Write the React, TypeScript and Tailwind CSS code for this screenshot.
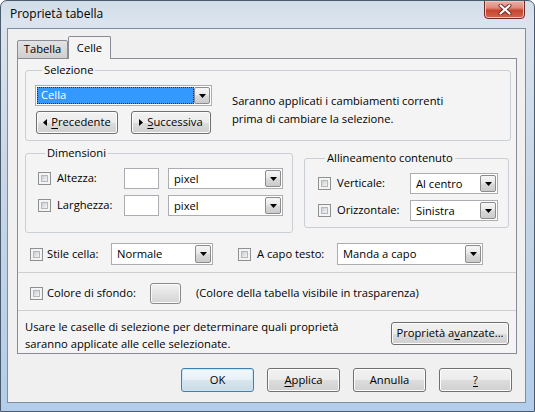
import React from "react";

const Tri = () => (
  <svg width="7" height="4" viewBox="0 0 7 4">
    <path d="M0 0h7L3.5 4z" fill="#000" />
  </svg>
);

function DropButton() {
  return (
    <div className="ml-auto my-[1px] mr-[1px] w-[16px] shrink-0 flex items-center justify-center rounded-[2px] border border-[#8c8c8c] bg-[linear-gradient(#f6f6f6_0%,#e9e9e9_45%,#d9d9d9_55%,#cbcbcb_100%)]">
      <Tri />
    </div>
  );
}

function Combo({ className, value }: { className: string; value: string }) {
  return (
    <div className={"flex h-[21px] border border-[#abadb3] bg-white " + className}>
      <span className="pl-[5px] self-center leading-[16px] whitespace-nowrap">{value}</span>
      <DropButton />
    </div>
  );
}

function Check() {
  return (
    <span className="shrink-0 w-[13px] h-[13px] border border-[#8e8f8f] bg-[#f4f4f4] p-[2px] flex">
      <span className="flex-1 border border-[#b4b8bd] bg-[linear-gradient(135deg,#c9cdd3,#f5f5f5)]" />
    </span>
  );
}

function Btn({
  className,
  children,
  isDefault,
}: {
  className: string;
  children: React.ReactNode;
  isDefault?: boolean;
}) {
  return (
    <div
      className={
        "flex items-center justify-center rounded-[3px] border whitespace-nowrap " +
        (isDefault
          ? "border-[#3c7fb1] bg-[linear-gradient(#f3f8fb_0%,#e7f0f6_50%,#d7e5ee_50%,#cadbe6_100%)] shadow-[inset_0_0_0_1px_#c9e9fb] "
          : "border-[#707070] bg-[linear-gradient(#f2f2f2_0%,#ebebeb_50%,#dddddd_50%,#cfcfcf_100%)] shadow-[inset_0_0_0_1px_#fcfcfc] ") +
        className
      }
    >
      {children}
    </div>
  );
}

function Group({
  title,
  className,
  children,
}: {
  title: string;
  className: string;
  children: React.ReactNode;
}) {
  return (
    <fieldset className={"rounded-[3px] border border-[#c9cfd4] " + className}>
      <legend className="ml-[7px] px-[2px] leading-[16px]">{title}</legend>
      {children}
    </fieldset>
  );
}

const U = ({ children }: { children: React.ReactNode }) => (
  <span className="underline underline-offset-[2px]">{children}</span>
);

export default function App() {
  return (
    <div className="w-[535px] h-[412px] overflow-hidden rounded-t-[7px] border border-[#4a5b6e] bg-[linear-gradient(180deg,#d2dde8_0%,#dbe4ee_5%,#c9d7e6_40%,#bdd1e8_75%,#b3cdea_100%)] font-['Open_Sans',sans-serif] text-[11.2px] text-black">
      {/* title bar */}
      <div className="flex h-[27px]">
        <div className="pl-[9px] pt-[5px] text-[12px] leading-[16px]">Proprietà tabella</div>
        <div className="ml-auto mr-[9px] -mt-[1px] w-[41px] h-[19px] flex items-center justify-center rounded-b-[4px] border border-[#6b2a22] bg-[linear-gradient(#eab2a7_0%,#de8a7b_40%,#c8442f_55%,#d2654d_100%)] shadow-[inset_0_0_0_1px_#f2c4bb]">
          <svg width="14" height="11" viewBox="0 0 14 11">
            <path d="M2.5 1.5l9 8M11.5 1.5l-9 8" stroke="#6a2a20" strokeWidth="4" strokeLinecap="round" />
            <path d="M2.5 1.5l9 8M11.5 1.5l-9 8" stroke="#fff" strokeWidth="2.2" strokeLinecap="round" />
          </svg>
        </div>
      </div>

      {/* client area */}
      <div className="ml-[6px] w-[519px] h-[375px] border border-[#7d8ea3] bg-[#f0f0f0]">
        {/* tabs */}
        <div className="flex items-end h-[29px] pl-[9px] pt-[7px]">
          <div className="relative z-10 -mb-[1px] w-[51px] h-[19px] flex items-center justify-center rounded-t-[2px] border border-[#898c95] bg-[linear-gradient(#e3e3e3,#cfcfcf)]">
            Tabella
          </div>
          <div className="relative z-10 -mb-[1px] w-[43px] h-[23px] flex items-center justify-center rounded-t-[2px] border border-b-0 border-[#898c95] bg-[#f4f4f4]">
            Celle
          </div>
        </div>

        {/* panel */}
        <div className="ml-[9px] w-[500px] h-[296px] border border-[#898c95] bg-[#f4f4f4] flex flex-col">
          <Group title="Selezione" className="mt-[3px] ml-[7px] w-[486px] pt-[7px] pl-[9px] pb-[6px]">
            <div className="flex items-center">
              <div className="flex flex-col w-[177px]">
                <div className="flex h-[21px] border border-[#abadb3] bg-white">
                  <div className="flex-1 m-[1px] mr-0 bg-[#3399ff] text-white pl-[4px] flex items-center outline-1 outline-dotted outline-[#222] -outline-offset-1">
                    Cella
                  </div>
                  <DropButton />
                </div>
                <div className="flex mt-[5px] ml-[1px] gap-[13px]">
                  <Btn className="w-[82px] h-[23px] gap-[4px]">
                    <svg width="4" height="7" viewBox="0 0 4 7">
                      <path d="M4 0v7L0 3.5z" fill="#000" />
                    </svg>
                    <span>
                      <U>P</U>recedente
                    </span>
                  </Btn>
                  <Btn className="w-[80px] h-[23px] gap-[4px]">
                    <svg width="4" height="7" viewBox="0 0 4 7">
                      <path d="M0 0v7L4 3.5z" fill="#000" />
                    </svg>
                    <span>
                      <U>S</U>uccessiva
                    </span>
                  </Btn>
                </div>
              </div>
              <div className="ml-[20px] leading-[18px]">
                <div>Saranno applicati i cambiamenti correnti</div>
                <div>prima di cambiare la selezione.</div>
              </div>
            </div>
          </Group>

          <div className="flex items-start">
            <Group title="Dimensioni" className="mt-[4px] ml-[7px] w-[268px] pt-[7px] pl-[12px] pr-[9px] pb-[16px]">
              <div className="flex flex-col gap-[6px]">
                {["Altezza:", "Larghezza:"].map((l) => (
                  <div key={l} className="flex items-center h-[21px]">
                    <Check />
                    <span className="ml-[6px] w-[67px]">{l}</span>
                    <div className="w-[35px] h-[21px] border border-[#abadb3] bg-white" />
                    <Combo className="ml-[9px] w-[115px]" value="pixel" />
                  </div>
                ))}
              </div>
            </Group>
            <Group title="Allineamento contenuto" className="mt-[9px] ml-[11px] w-[205px] pt-[7px] pl-[13px] pr-[10px] pb-[6px]">
              <div className="flex flex-col gap-[6px]">
                <div className="flex items-center h-[21px]">
                  <Check />
                  <span className="ml-[6px] w-[73px]">Verticale:</span>
                  <Combo className="w-[88px]" value="Al centro" />
                </div>
                <div className="flex items-center h-[21px]">
                  <Check />
                  <span className="ml-[6px] w-[73px]">Orizzontale:</span>
                  <Combo className="w-[88px]" value="Sinistra" />
                </div>
              </div>
            </Group>
          </div>

          <div className="flex items-center h-[22px] mt-[10px] pl-[12px]">
            <Check />
            <span className="ml-[4px] w-[64px]">Stile cella:</span>
            <Combo className="w-[102px] h-[22px]" value="Normale" />
            <span className="ml-[25px]">
              <Check />
            </span>
            <span className="ml-[6px] w-[80px]">A capo testo:</span>
            <Combo className="w-[146px] h-[22px]" value="Manda a capo" />
          </div>

          <div className="mt-[7px] border-t border-[#cfcfcf]" />

          <div className="flex items-center h-[21px] mt-[10px] pl-[12px]">
            <Check />
            <span className="ml-[4px] w-[103px]">Colore di sfondo:</span>
            <div className="w-[31px] h-[21px] rounded-[3px] border border-[#8a8a8a] bg-[linear-gradient(#f2f2f2,#d4d4d4)] shadow-[inset_0_0_0_1px_#fafafa]" />
            <span className="ml-[15px]">(Colore della tabella visibile in trasparenza)</span>
          </div>

          <div className="mt-[6px] border-t border-[#cfcfcf]" />

          <div className="flex items-start pl-[7px] pr-[7px]">
            <div className="mt-[7px] leading-[17px]">
              <div>Usare le caselle di selezione per determinare quali proprietà</div>
              <div>saranno applicate alle celle selezionate.</div>
            </div>
            <Btn className="ml-auto mt-[11px] w-[118px] h-[23px]">
              <span>
                Proprietà a<U>v</U>anzate...
              </span>
            </Btn>
          </div>
        </div>

        {/* dialog buttons */}
        <div className="flex justify-end gap-[13px] pr-[13px] mt-[14px]">
          <Btn isDefault className="w-[73px] h-[24px]">
            OK
          </Btn>
          <Btn className="w-[73px] h-[24px]">
            <span>
              <U>A</U>pplica
            </span>
          </Btn>
          <Btn className="w-[73px] h-[24px]">Annulla</Btn>
          <Btn className="w-[73px] h-[24px]">
            <U>?</U>
          </Btn>
        </div>
      </div>
    </div>
  );
}
